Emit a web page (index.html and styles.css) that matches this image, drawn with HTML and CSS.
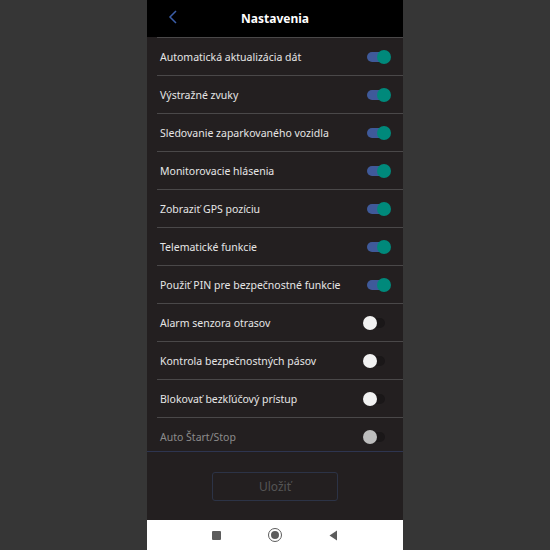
FILE: index.html
```html
<!DOCTYPE html>
<html lang="sk">
<head>
    <meta charset="UTF-8">
    <meta name="viewport" content="width=device-width, initial-scale=1.0">
    <title>Nastavenia</title>
    <link rel="stylesheet" href="styles.css">
</head>
<body>

    <div class="phone">
        <!-- Header -->
        <div class="header">
            <svg class="back" width="10" height="14" viewBox="0 0 10 14">
                <path d="M8 1 L2 7 L8 13" fill="none" stroke="#3b5ea8" stroke-width="1.5"/>
            </svg>
            <h2>Nastavenia</h2>
        </div>

        <!-- Settings list -->
        <ul class="list">
            <li class="row"><span>Automatická aktualizácia dát</span><span class="toggle on"></span></li>
            <li class="row"><span>Výstražné zvuky</span><span class="toggle on"></span></li>
            <li class="row"><span>Sledovanie zaparkovaného vozidla</span><span class="toggle on"></span></li>
            <li class="row"><span>Monitorovacie hlásenia</span><span class="toggle on"></span></li>
            <li class="row"><span>Zobraziť GPS pozíciu</span><span class="toggle on"></span></li>
            <li class="row"><span>Telematické funkcie</span><span class="toggle on"></span></li>
            <li class="row"><span>Použiť PIN pre bezpečnostné funkcie</span><span class="toggle on"></span></li>
            <li class="row"><span>Alarm senzora otrasov</span><span class="toggle"></span></li>
            <li class="row"><span>Kontrola bezpečnostných pásov</span><span class="toggle"></span></li>
            <li class="row"><span>Blokovať bezkľúčový prístup</span><span class="toggle"></span></li>
            <li class="row disabled"><span>Auto Štart/Stop</span><span class="toggle"></span></li>
        </ul>

        <div class="footer">
            <button class="save" disabled>Uložiť</button>
        </div>

        <!-- Android nav bar -->
        <div class="navbar">
            <span class="nav-square"></span>
            <span class="nav-home"></span>
            <svg width="9" height="11" viewBox="0 0 9 11">
                <path d="M8 0.5 L8 10.5 L0.5 5.5 Z" fill="#5c5c5c"/>
            </svg>
        </div>
    </div>

</body>
</html>
```

FILE: styles.css
```css
html, body {
    margin: 0;
    height: 100%;
}

body {
    font-family: "Noto Sans", Arial, sans-serif;
    background-color: #363636;
    display: flex;
    justify-content: center;
}

.phone {
    width: 256px;
    height: 550px;
    background-color: #231f20;
    display: flex;
    flex-direction: column;
}

.header {
    height: 37px;
    background-color: #000;
    display: flex;
    align-items: center;
    justify-content: center;
    position: relative;
}

.header h2 {
    margin: 0;
    color: #fff;
    font-size: 12px;
    font-weight: bold;
}

.back {
    position: absolute;
    left: 21px;
    top: 10px;
}

.list {
    list-style: none;
    margin: 0;
    padding: 0;
    height: 414px;
    overflow: hidden;
    border-bottom: 1px solid #2e3550;
}

.row {
    height: 37px;
    margin-left: 10px;
    padding: 0 18px 0 3px;
    border-top: 1px solid #4a4849;
    display: flex;
    align-items: center;
    justify-content: space-between;
    color: #e6e6e6;
    font-size: 10.5px;
}

.row.disabled {
    color: #8c8c8c;
}

/* Toggle switch */
.toggle {
    position: relative;
    width: 18px;
    height: 10px;
    border-radius: 5px;
    background-color: #1a1718;
}

.toggle::after {
    content: "";
    position: absolute;
    top: -2px;
    left: -4px;
    width: 14px;
    height: 14px;
    border-radius: 50%;
    background-color: #f2f2f2;
}

.toggle.on {
    background-color: #3f5a9a;
}

.toggle.on::after {
    left: 10px;
    background-color: #00897b;
}

.row.disabled .toggle::after {
    background-color: #bdbdbd;
}

.footer {
    flex: 1;
    display: flex;
    justify-content: center;
    padding-top: 20px;
}

.save {
    width: 126px;
    height: 29px;
    background: transparent;
    border: 1px solid #2c3346;
    border-radius: 3px;
    color: #555;
    font-family: "Noto Sans", Arial, sans-serif;
    font-size: 12px;
}

.navbar {
    height: 30px;
    background-color: #fff;
    display: flex;
    align-items: center;
    justify-content: center;
    gap: 48px;
}

.nav-square {
    width: 9px;
    height: 9px;
    border-radius: 1px;
    background-color: #5c5c5c;
}

.nav-home {
    width: 8px;
    height: 8px;
    border: 2px solid #fff;
    outline: 1.5px solid #5c5c5c;
    border-radius: 50%;
    background-color: #5c5c5c;
}
```
